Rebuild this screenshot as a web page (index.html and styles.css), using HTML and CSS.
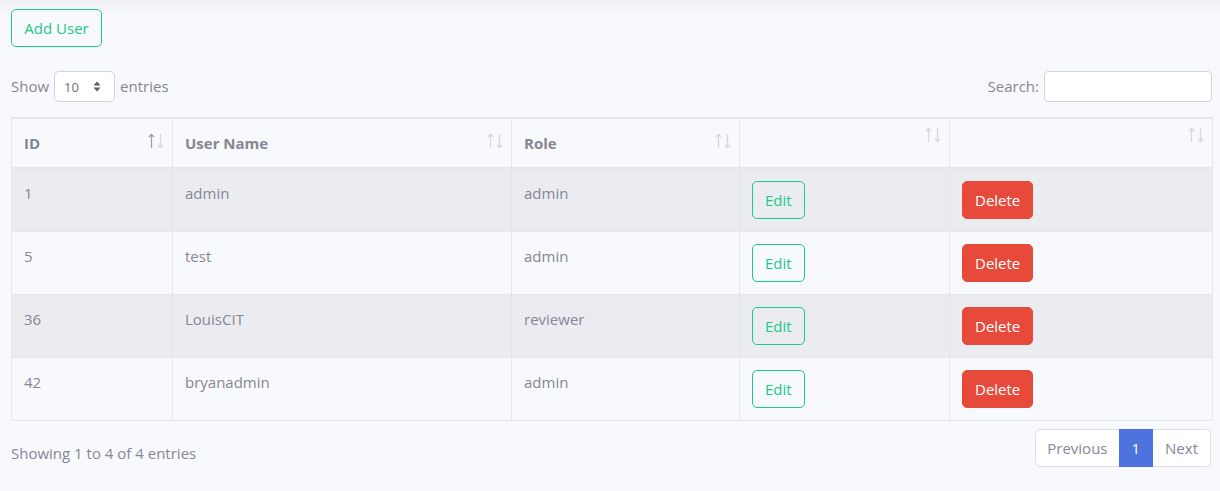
FILE: index.html
```html
<!DOCTYPE html>
<html>
<head>
<meta charset="utf-8">
<link rel="stylesheet" href="styles.css">
</head>
<body>
<div class="shade"></div>
<div class="page">
  <div class="toolbar">
    <button class="btn btn-outline-success">Add User</button>
  </div>
  <div class="dt-top">
    <label class="len"><span class="lbl">Show</span>
      <span class="select">10
        <svg width="8" height="11" viewBox="0 0 8 11"><path d="M4 0.5 L7.5 4.5 H0.5 Z M4 10.5 L7.5 6.5 H0.5 Z" fill="#5a5c69"/></svg>
      </span>
      <span class="lbl">entries</span></label>
    <label class="search"><span class="lbl">Search:</span> <span class="input"></span></label>
  </div>
  <table class="tbl">
    <colgroup>
      <col class="c1"><col class="c2"><col class="c3"><col class="c4"><col class="c5">
    </colgroup>
    <thead>
      <tr>
        <th><div class="th-in"><span>ID</span><svg class="sort on" width="16" height="16" viewBox="0 0 16 16"><path class="up" d="M3.5 1.5 V15 M1 4 L3.5 1.5 L6 4"/><path class="dn" d="M12.5 1 V14.5 M10 12 L12.5 14.5 L15 12"/></svg></div></th>
        <th><div class="th-in"><span>User Name</span><svg class="sort" width="16" height="16" viewBox="0 0 16 16"><path class="up" d="M3.5 1.5 V15 M1 4 L3.5 1.5 L6 4"/><path class="dn" d="M12.5 1 V14.5 M10 12 L12.5 14.5 L15 12"/></svg></div></th>
        <th><div class="th-in"><span>Role</span><svg class="sort" width="16" height="16" viewBox="0 0 16 16"><path class="up" d="M3.5 1.5 V15 M1 4 L3.5 1.5 L6 4"/><path class="dn" d="M12.5 1 V14.5 M10 12 L12.5 14.5 L15 12"/></svg></div></th>
        <th><div class="th-in"><span></span><svg class="sort" width="16" height="16" viewBox="0 0 16 16"><path class="up" d="M3.5 1.5 V15 M1 4 L3.5 1.5 L6 4"/><path class="dn" d="M12.5 1 V14.5 M10 12 L12.5 14.5 L15 12"/></svg></div></th>
        <th><div class="th-in"><span></span><svg class="sort" width="16" height="16" viewBox="0 0 16 16"><path class="up" d="M3.5 1.5 V15 M1 4 L3.5 1.5 L6 4"/><path class="dn" d="M12.5 1 V14.5 M10 12 L12.5 14.5 L15 12"/></svg></div></th>
      </tr>
    </thead>
    <tbody>
      <tr class="odd"><td>1</td><td>admin</td><td>admin</td><td><button class="btn btn-outline-success">Edit</button></td><td><button class="btn btn-danger">Delete</button></td></tr>
      <tr><td>5</td><td>test</td><td>admin</td><td><button class="btn btn-outline-success">Edit</button></td><td><button class="btn btn-danger">Delete</button></td></tr>
      <tr class="odd"><td>36</td><td>LouisCIT</td><td>reviewer</td><td><button class="btn btn-outline-success">Edit</button></td><td><button class="btn btn-danger">Delete</button></td></tr>
      <tr><td>42</td><td>bryanadmin</td><td>admin</td><td><button class="btn btn-outline-success">Edit</button></td><td><button class="btn btn-danger">Delete</button></td></tr>
    </tbody>
  </table>
  <div class="dt-bottom">
    <div class="info">Showing 1 to 4 of 4 entries</div>
    <ul class="pager">
      <li class="pg prev">Previous</li>
      <li class="pg active">1</li>
      <li class="pg">Next</li>
    </ul>
  </div>
</div>
</body>
</html>
```
FILE: styles.css
```css
html, body {
  margin: 0;
  padding: 0;
  background: #f8f9fc;
}
body {
  font-family: "Open Sans", "Noto Sans", sans-serif;
  font-size: 15px;
  line-height: 24px;
  color: #858796;
  position: relative;
}
.shade {
  position: absolute;
  left: 0; right: 0; top: 0;
  height: 14px;
  background: linear-gradient(#eff0f4, #f8f9fc);
}
.page {
  position: relative;
  padding: 9px 8px 0 11px;
}
.toolbar { height: 37px; }
.btn {
  font-family: inherit;
  font-size: 15px;
  line-height: 24px;
  padding: 6px 12px;
  border-radius: 5px;
  border: 1px solid transparent;
  background: transparent;
  cursor: pointer;
  display: inline-block;
}
.btn-outline-success {
  color: #1cc88a;
  border-color: #1cc88a;
}
.toolbar .btn { padding: 6px 12px; height: 38px; width: 91px; }
.btn-danger {
  background: #e74a3b;
  border-color: #e74a3b;
  color: #fff;
}
.dt-top {
  display: flex;
  justify-content: space-between;
  align-items: center;
  margin-top: 25px;
  height: 31px;
}
.len, .search {
  display: flex;
  align-items: center;
  gap: 5px;
  font-size: 15px;
}
.lbl { position: relative; top: -1px; }
.select {
  display: inline-flex;
  align-items: center;
  justify-content: space-between;
  box-sizing: border-box;
  width: 61px;
  height: 31px;
  padding: 0 13px 0 9px;
  background: #fff;
  border: 1px solid #d1d3e2;
  border-radius: 5px;
  font-size: 13px;
  color: #6e707e;
}
.input {
  display: inline-block;
  box-sizing: border-box;
  width: 168px;
  height: 31px;
  background: #fff;
  border: 1px solid #d1d3e2;
  border-radius: 4px;
}
.tbl {
  margin-top: 15px;
  width: 1201px;
  border-collapse: collapse;
  table-layout: fixed;
  border: 1px solid #e3e6f0;
}
.c1 { width: 161px; }
.c2 { width: 339px; }
.c3 { width: 228px; }
.c4 { width: 210px; }
.c5 { width: 263px; }
.tbl th, .tbl td {
  border: 1px solid #e3e6f0;
  padding: 12px;
  text-align: left;
  vertical-align: top;
}
.tbl thead th {
  border-top-width: 2px;
  border-bottom: 2px solid #e3e6f0;
  font-weight: 700;
  padding: 12px 8px 12px 12px;
}
.th-in {
  display: flex;
  justify-content: space-between;
  align-items: center;
}
.sort {
  fill: none;
  stroke-width: 1.3;
  margin-top: -4px;
}
.sort .up, .sort .dn { stroke: #d6d7de; }
.sort.on .up { stroke: #9fa0ad; }
.tbl tbody td { height: 38px; }
.tbl tbody tr.odd { background: #ebecef; }
.tbl td .btn { display: block; }
.dt-bottom {
  display: flex;
  justify-content: space-between;
  align-items: center;
  margin-top: 8px;
}
.info { padding-top: 10px; }
.pager {
  display: flex;
  list-style: none;
  margin: 0;
  padding: 0 1px 0 0;
}
.pg {
  padding: 6px 12px;
  background: #fff;
  border: 1px solid #dddfeb;
  margin-left: -1px;
  line-height: 24px;
  color: #858796;
}
.pg.prev { padding: 6px 11px; }
.pg:first-child { border-radius: 5px 0 0 5px; }
.pg:last-child { border-radius: 0 5px 5px 0; }
.pg.active {
  background: #4e73df;
  border-color: #4e73df;
  color: #fff;
  position: relative;
}
```
